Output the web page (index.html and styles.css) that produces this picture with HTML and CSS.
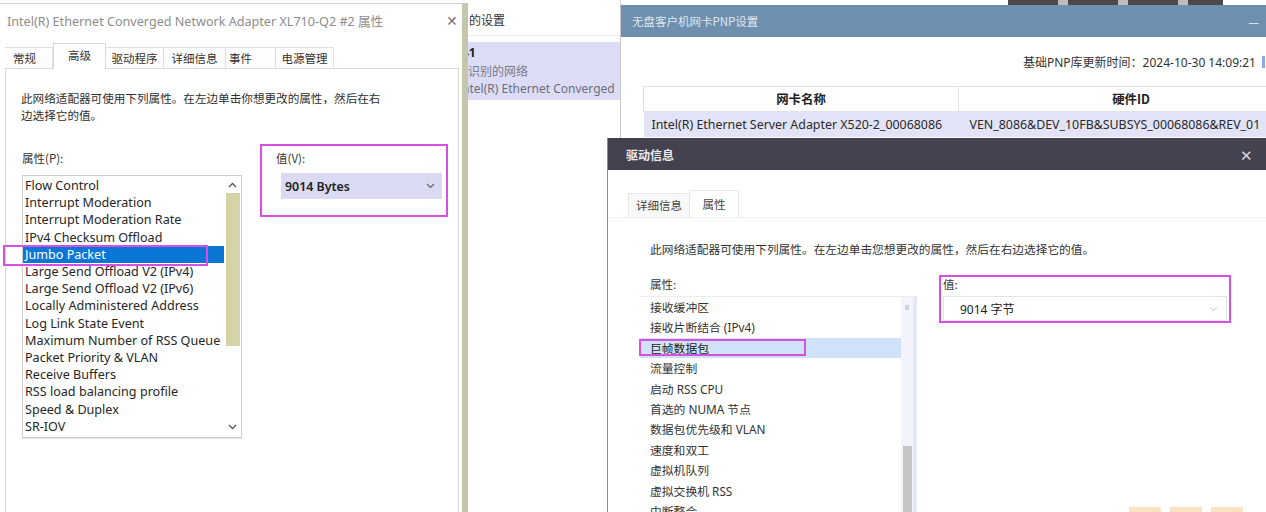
FILE: index.html
```html
<!DOCTYPE html>
<html lang="zh-CN">
<head>
	<meta charset="UTF-8">
	<title>网卡属性 - Jumbo Packet</title>
	<link rel="stylesheet" href="styles.css">
</head>
<body>
	<div class="desk">

		<!-- window behind everything: adapter list -->
		<div class="netwin">
			<div class="net-title">的设置</div>
			<div class="net-item">
				<div class="net-name">41</div>
				<div class="net-sub">未识别的网络</div>
				<div class="net-dev">Intel(R) Ethernet Converged</div>
			</div>
		</div>

		<!-- windows adapter properties -->
		<div class="props">
			<div class="props-title">
				<span>Intel(R) Ethernet Converged Network Adapter XL710-Q2 #2 属性</span>
				<span class="close">✕</span>
			</div>
			<div class="tabs">
				<div class="tab t1">常规</div>
				<div class="tab t2 on">高级</div>
				<div class="tab t3">驱动程序</div>
				<div class="tab t4">详细信息</div>
				<div class="tab t5">事件</div>
				<div class="tab t6">电源管理</div>
			</div>
			<div class="panel">
				<p class="desc">此网络适配器可使用下列属性。在左边单击你想更改的属性，然后在右<br>边选择它的值。</p>
				<div class="cols">
					<div class="col-l">
						<div class="lbl">属性(P):</div>
						<div class="listbox">
							<ul class="items">
								<li>Flow Control</li>
								<li>Interrupt Moderation</li>
								<li>Interrupt Moderation Rate</li>
								<li>IPv4 Checksum Offload</li>
								<li class="sel">Jumbo Packet</li>
								<li>Large Send Offload V2 (IPv4)</li>
								<li>Large Send Offload V2 (IPv6)</li>
								<li>Locally Administered Address</li>
								<li>Log Link State Event</li>
								<li>Maximum Number of RSS Queue</li>
								<li>Packet Priority &amp; VLAN</li>
								<li>Receive Buffers</li>
								<li>RSS load balancing profile</li>
								<li>Speed &amp; Duplex</li>
								<li>SR-IOV</li>
							</ul>
							<div class="sbar">
								<div class="arr">
									<svg width="9" height="6" viewBox="0 0 9 6"><path d="M1 5 L4.5 1.5 L8 5" fill="none" stroke="#555" stroke-width="1.3"/></svg>
								</div>
								<div class="thumb"></div>
								<div class="arr down">
									<svg width="9" height="6" viewBox="0 0 9 6"><path d="M1 1 L4.5 4.5 L8 1" fill="none" stroke="#555" stroke-width="1.3"/></svg>
								</div>
							</div>
						</div>
					</div>
					<div class="col-r">
						<div class="lbl">值(V):</div>
						<div class="combo">
							<span>9014 Bytes</span>
							<svg width="9" height="6" viewBox="0 0 9 6"><path d="M1 1 L4.5 4.5 L8 1" fill="none" stroke="#666" stroke-width="1.2"/></svg>
						</div>
					</div>
				</div>
			</div>
			<div class="mark mark-a1"></div>
			<div class="mark mark-a2"></div>
		</div>

		<!-- diskless client pnp window -->
		<div class="topbits"></div>
		<div class="pnp">
			<div class="pnp-title">
				<span>无盘客户机网卡PNP设置</span>
				<span class="minus">—</span>
			</div>
			<div class="pnp-body">
				<div class="pnp-time">基础PNP库更新时间：2024-10-30 14:09:21<i class="btn-edge"></i></div>
				<table class="grid">
					<tr>
						<th class="c1">网卡名称</th>
						<th class="c2">硬件ID</th>
					</tr>
					<tr class="row">
						<td>Intel(R) Ethernet Server Adapter X520-2_00068086</td>
						<td>VEN_8086&amp;DEV_10FB&amp;SUBSYS_00068086&amp;REV_01</td>
					</tr>
				</table>
			</div>
		</div>

		<!-- driver info dialog -->
		<div class="drv">
			<div class="drv-title">
				<span>驱动信息</span>
				<span class="close">✕</span>
			</div>
			<div class="drv-tabs">
				<div class="dtab">详细信息</div>
				<div class="dtab on">属性</div>
			</div>
			<div class="drv-body">
				<p class="ddesc">此网络适配器可使用下列属性。在左边单击您想更改的属性，然后在右边选择它的值。</p>
				<div class="dcols">
					<div class="dcol-l">
						<div class="dlbl">属性:</div>
						<div class="dlist">
							<ul class="ditems">
								<li>接收缓冲区</li>
								<li>接收片断结合 (IPv4)</li>
								<li class="sel">巨帧数据包</li>
								<li>流量控制</li>
								<li>启动 RSS CPU</li>
								<li>首选的 NUMA 节点</li>
								<li>数据包优先级和 VLAN</li>
								<li>速度和双工</li>
								<li>虚拟机队列</li>
								<li>虚拟交换机 RSS</li>
								<li>中断整合</li>
							</ul>
							<div class="dbar">
								<div class="darr"></div>
								<div class="dthumb"></div>
							</div>
						</div>
					</div>
					<div class="dcol-r">
						<div class="dlbl">值:</div>
						<div class="dcombo">
							<span>9014 字节</span>
							<svg width="9" height="6" viewBox="0 0 9 6"><path d="M1 1 L4.5 4.5 L8 1" fill="none" stroke="#d8d8d8" stroke-width="1.1"/></svg>
						</div>
					</div>
				</div>
			</div>
			<div class="mark mark-b1"></div>
			<div class="mark mark-b2"></div>
			<div class="logo">
				<i></i><i></i><i></i>
			</div>
		</div>

	</div>
</body>
</html>
```

FILE: styles.css
```css
body{
	margin: 0;
	background: #fff;
	font-family: "Noto Sans", "Noto Sans CJK SC", sans-serif;
	color: #2b2b2b;
}
.desk{
	position: relative;
	width: 1266px;
	height: 512px;
	overflow: hidden;
	background: #fff;
}
ul{
	list-style: none;
	margin: 0;
	padding: 0;
}
p{
	margin: 0;
}

/* adapter list window (mostly hidden) */
.netwin{
	position: absolute;
	left: 468px;
	top: 0;
	width: 152px;
	height: 512px;
	background: #fff;
	border-right: 1px solid #d6d6d6;
	overflow: hidden;
}
.net-title{
	height: 35px;
	line-height: 39px;
	padding-left: 1px;
	font-size: 12px;
	color: #333;
	border-bottom: 1px solid #ececec;
	font-family: "Noto Sans CJK SC", sans-serif;
}
.net-item{
	margin-top: 6px;
	height: 58px;
	background: #dcdcf6;
	font-size: 12px;
	line-height: 18px;
	padding-top: 2px;
	box-sizing: border-box;
	white-space: nowrap;
}
.net-name{
	font-weight: bold;
	color: #222;
	margin-left: -6px;
}
.net-sub{
	color: #7b7b86;
	font-family: "Noto Sans CJK SC", sans-serif;
	margin-left: -12px;
}
.net-dev{
	color: #6e6e7c;
	margin-left: -10px;
}

/* properties dialog */
.props{
	position: absolute;
	left: 0;
	top: 3px;
	width: 462px;
	height: 520px;
	background: #fff;
	border-top: 1px solid #d0d0d0;
	border-right: 6px solid #c6c5ae;
}
.props-title{
	display: flex;
	justify-content: space-between;
	align-items: center;
	height: 32px;
	padding: 0 4px 0 7px;
	font-size: 12.6px;
	color: #8d8d8d;
	white-space: nowrap;
}
.props-title .close{
	font-size: 14px;
	color: #777;
}
.tabs{
	display: flex;
	align-items: flex-end;
	height: 32px;
	padding-left: 5px;
	font-family: "Noto Sans CJK SC", sans-serif;
	font-size: 11.5px;
	white-space: nowrap;
}
.tab{
	box-sizing: border-box;
	height: 21px;
	line-height: 20px;
	text-align: center;
	border: 1px solid #e0e0e0;
	border-bottom: none;
	border-left: none;
	background: #fdfdfd;
	color: #333;
}
.t1{ width: 48px; text-align: left; padding-left: 8px; }
.t2{ width: 53px; }
.t3{ width: 58px; }
.t4{ width: 62px; }
.t5{ width: 50px; text-align: left; padding-left: 3px; }
.t6{ width: 58px; }
.tab.on{
	height: 26px;
	line-height: 22px;
	background: #fff;
	border-left: 1px solid #d8d8d8;
	border-color: #d8d8d8;
	position: relative;
	z-index: 1;
	margin-bottom: -1px;
}

.panel{
	margin-left: 5px;
	width: 454px;
	height: 460px;
	border: 1px solid #dadada;
	padding: 21px 0 0 15px;
	box-sizing: border-box;
}
.desc{
	font-family: "Noto Sans CJK SC", sans-serif;
	font-size: 11.6px;
	line-height: 17px;
	color: #2e2e2e;
}
.cols{
	display: flex;
	margin-top: 26px;
}
.col-l{
	width: 220px;
	margin-left: 1px;
}
.col-r{
	margin-left: 34px;
}
.lbl{
	font-family: "Noto Sans CJK SC", sans-serif;
	font-size: 11.5px;
	line-height: 17px;
	color: #333;
	margin-bottom: 8px;
}
.col-r .lbl{
	margin-bottom: 6px;
}
.listbox{
	display: flex;
	height: 263px;
	border: 1px solid #cfcfcf;
	box-sizing: border-box;
	box-shadow: 0 1px 1px #e4e4e4;
}
.items{
	flex: 1;
	padding-top: 1px;
	font-size: 12.6px;
	line-height: 17.2px;
	color: #262626;
	white-space: nowrap;
	overflow: hidden;
}
.items li{
	padding-left: 2px;
}
.items .sel{
	background: #0a77d6;
	color: #fff;
}
.sbar{
	width: 17px;
	display: flex;
	flex-direction: column;
	align-items: center;
}
.arr{
	height: 17px;
	display: flex;
	align-items: center;
	justify-content: center;
}
.arr.down{
	margin-top: auto;
	height: 20px;
}
.thumb{
	width: 14px;
	height: 153px;
	background: #d6d4a6;
}
.combo{
	display: flex;
	justify-content: space-between;
	align-items: center;
	margin-left: 5px;
	width: 161px;
	height: 26px;
	box-sizing: border-box;
	padding: 0 7px 0 4px;
	background: #dadaf3;
	font-size: 12.4px;
	font-weight: 600;
	color: #222;
}

/* annotation boxes */
.mark{
	position: absolute;
	border: 2px solid #d84fe3;
	box-sizing: border-box;
}
.mark-a1{ left: 3px; top: 241px; width: 205px; height: 21px; }
.mark-a2{ left: 260px; top: 140px; width: 188px; height: 73px; }

/* pnp window */
.topbits{
	position: absolute;
	left: 1008px;
	top: 0;
	width: 215px;
	height: 5px;
	background: repeating-linear-gradient(90deg, #4a4a4a 0 50px, #bdbdbd 50px 60px);
}
.pnp{
	position: absolute;
	left: 620px;
	top: 5px;
	width: 646px;
	height: 140px;
	background: #fff;
	border-left: 1px solid #c8c8c8;
	overflow: hidden;
}
.pnp-title{
	display: flex;
	justify-content: space-between;
	align-items: center;
	height: 32px;
	background: #6f8fae;
	padding: 0 8px 0 11px;
	font-family: "Noto Sans CJK SC", sans-serif;
	font-size: 11.5px;
	color: #dfe8f0;
}
.pnp-title .minus{
	font-size: 12px;
	color: #eef3f7;
}
.pnp-body{
	padding-left: 22px;
}
.pnp-time{
	display: flex;
	align-items: center;
	justify-content: flex-end;
	height: 49px;
	padding-right: 2px;
	font-size: 12px;
	color: #333;
	white-space: nowrap;
}
.btn-edge{
	display: block;
	width: 3px;
	height: 12px;
	margin-left: 6px;
	background: #8fa8e8;
}
.grid{
	border-collapse: collapse;
	width: 660px;
	table-layout: fixed;
	font-size: 12.4px;
	white-space: nowrap;
}
.grid th{
	height: 24px;
	padding: 0;
	border-top: 1px solid #e2e2e2;
	border-bottom: 1px solid #e2e2e2;
	font-family: "Noto Sans CJK SC", "Noto Sans", sans-serif;
	font-weight: bold;
	color: #222;
}
.grid .c1{
	width: 314px;
	border-left: 1px solid #e2e2e2;
	border-right: 1px solid #e2e2e2;
}
.grid td{
	height: 25px;
	padding: 0 0 0 8px;
	color: #2a2a2a;
	overflow: hidden;
}
.grid td + td{
	padding-left: 11px;
}
.grid .row{
	background: #e3e3f7;
}

/* driver info dialog */
.drv{
	position: absolute;
	left: 607px;
	top: 138px;
	width: 680px;
	height: 380px;
	background: #fff;
	border-left: 1px solid #8c8c8c;
}
.drv-title{
	display: flex;
	justify-content: space-between;
	align-items: center;
	height: 32px;
	background: #45424f;
	padding: 0 35px 0 18px;
	font-family: "Noto Sans CJK SC", sans-serif;
	font-size: 12px;
	font-weight: bold;
	color: #eceaf0;
}
.drv-title .close{
	font-weight: normal;
	font-size: 15px;
	color: #d9d7de;
}
.drv-tabs{
	display: flex;
	align-items: flex-end;
	height: 47px;
	padding-left: 20px;
	font-family: "Noto Sans CJK SC", sans-serif;
	font-size: 11.5px;
	color: #444;
}
.dtab{
	height: 23px;
	line-height: 23px;
	width: 60px;
	text-align: center;
	border: 1px solid #e6e6e6;
	border-bottom: none;
	background: #f9f9f9;
}
.dtab.on{
	width: 48px;
	height: 26px;
	line-height: 26px;
	background: #fff;
	border-left: none;
}
.drv-body{
	border-top: 1px solid #f0f0f0;
	padding: 22px 0 0 32px;
}
.ddesc{
	font-family: "Noto Sans CJK SC", sans-serif;
	font-size: 11.7px;
	line-height: 17px;
	color: #333;
	padding-left: 10px;
}
.dcols{
	display: flex;
	margin-top: 19px;
}
.dcol-l{
	width: 277px;
}
.dcol-r{
	margin-left: 26px;
}
.dlbl{
	font-family: "Noto Sans CJK SC", sans-serif;
	font-size: 11.5px;
	line-height: 17px;
	color: #333;
	padding-left: 10px;
	margin-bottom: 3px;
}
.dcol-r .dlbl{
	padding-left: 0;
}
.dlist{
	display: flex;
	height: 240px;
	border-top: 1px solid #ededed;
	border-right: 4px solid #e6e6f8;
}
.ditems{
	flex: 1;
	font-size: 11.8px;
	line-height: 20.4px;
	color: #333;
	white-space: nowrap;
}
.ditems li{
	padding-left: 10px;
}
.ditems .sel{
	background: #cfe2f8;
	color: #222;
}
.dbar{
	width: 12px;
	display: flex;
	flex-direction: column;
	align-items: center;
	background: #f3f3fb;
}
.darr{
	width: 4px;
	height: 5px;
	margin-top: 8px;
	background: #cfcfe8;
}
.dthumb{
	margin-top: 136px;
	width: 9px;
	height: 80px;
	background: #c6c6c6;
}
.dcombo{
	display: flex;
	justify-content: space-between;
	align-items: center;
	width: 284px;
	height: 25px;
	box-sizing: border-box;
	padding: 0 8px 0 16px;
	border: 1px solid #e4e4e4;
	font-size: 12px;
	color: #222;
}
.mark-b1{ left: 31px; top: 201px; width: 167px; height: 17px; }
.mark-b2{ left: 331px; top: 137px; width: 292px; height: 48px; }
.logo{
	position: absolute;
	left: 521px;
	top: 369px;
	display: flex;
	gap: 9px;
}
.logo i{
	display: block;
	width: 32px;
	height: 6px;
	background: #fbe2c2;
}
```
